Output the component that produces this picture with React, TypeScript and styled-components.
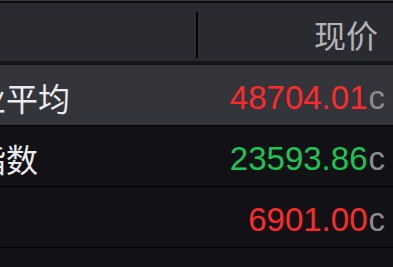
import * as React from 'react';
import styled, { createGlobalStyle } from 'styled-components';

interface Quote {
    id: string;
    name: string;
    price: string;
    change: number;
}

const QUOTES: Quote[] = [
    { id: 'dji', name: '道琼斯工业平均', price: '48704.01', change: 1 },
    { id: 'ixic', name: '纳斯达克指数', price: '23593.86', change: -1 },
    { id: 'spx', name: '标普500', price: '6901.00', change: 1 },
];

// the list is scrolled sideways so the name column is partly hidden
const SCROLL_LEFT = 154;

const App: React.FC = () => {
    const scrollRef = React.useRef<HTMLDivElement>(null);
    const [selectedId] = React.useState('dji');

    React.useLayoutEffect(() => {
        if (scrollRef.current) {
            scrollRef.current.scrollLeft = SCROLL_LEFT;
        }
    }, []);

    return (
        <>
            <GlobalStyle />
            <DivScreen>
                <DivTopEdge />
                <DivScroller ref={scrollRef}>
                    <DivTable>
                        <DivHeaderRow>
                            <DivHeaderName />
                            <DivHeaderPrice>现价</DivHeaderPrice>
                        </DivHeaderRow>
                        {QUOTES.map((quote) => (
                            <DivQuoteRow key={quote.id} isSelected={quote.id === selectedId}>
                                <DivName>{quote.name}</DivName>
                                <DivPrice>
                                    <SpanValue isUp={quote.change > 0}>{quote.price}</SpanValue>
                                    <SpanFlag>c</SpanFlag>
                                </DivPrice>
                            </DivQuoteRow>
                        ))}
                        <DivQuoteRow isSelected={false} />
                    </DivTable>
                </DivScroller>
            </DivScreen>
        </>
    );
};

const GlobalStyle = createGlobalStyle`
    html, body {
        margin: 0;
        padding: 0;
        background: #121216;
    }
`;

const DivScreen = styled.div`
    width: 393px;
    height: 267px;
    overflow: hidden;
    background: #121216;
    font-family: 'Liberation Sans', 'Noto Sans CJK SC', sans-serif;
`;

const DivTopEdge = styled.div`
    height: 1px;
    background: #3a3b41;
    border-bottom: 2px solid #0c0c0e;
`;

const DivScroller = styled.div`
    overflow: hidden;
    width: 393px;
`;

const DivTable = styled.div`
    width: 547px;
    display: flex;
    flex-direction: column;
`;

const DivHeaderRow = styled.div`
    display: grid;
    grid-template-columns: 352px 1fr;
    height: 58px;
    background: #2a2b30;
`;

const DivHeaderName = styled.div`
    display: flex;
    justify-content: flex-end;
    align-items: center;

    &::after {
        content: '';
        width: 2px;
        height: 46px;
        margin-top: 6px;
        background: #050506;
    }
`;

const DivHeaderPrice = styled.div`
    display: flex;
    justify-content: flex-end;
    align-items: center;
    padding-right: 15px;
    padding-top: 4px;
    font-size: 32px;
    color: #b4b4b6;
`;

const DivQuoteRow = styled.div<{ isSelected: boolean }>`
    display: grid;
    grid-template-columns: 352px 1fr;
    align-items: end;
    height: 61px;
    box-sizing: border-box;
    border-bottom: 1px solid #050506;
    background: ${({ isSelected }) => (isSelected ? '#33353b' : '#121216')};

    &:nth-child(2) {
        height: 65px;
        border-top: 4px solid #141519;
    }
`;

const DivName = styled.div`
    font-size: 32px;
    line-height: 1;
    color: #ececee;
    white-space: nowrap;
    padding-bottom: 9px;
`;

const DivPrice = styled.div`
    display: flex;
    justify-content: flex-end;
    align-items: baseline;
    padding-right: 8px;
    padding-bottom: 11px;
    font-size: 33px;
    line-height: 1;
`;

const SpanValue = styled.span<{ isUp: boolean }>`
    color: ${({ isUp }) => (isUp ? '#ff2b2b' : '#1ec454')};
`;

const SpanFlag = styled.span`
    margin-left: 1px;
    color: #8c8c8e;
`;

export default App;
